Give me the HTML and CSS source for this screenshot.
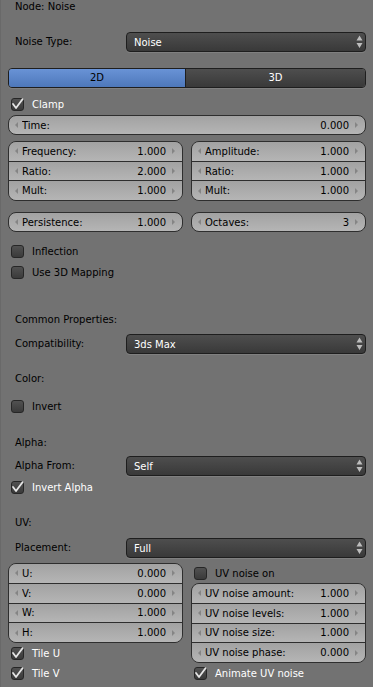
FILE: index.html
```html
<!DOCTYPE html>
<html>
<head>
<meta charset="utf-8">
<link rel="stylesheet" href="styles.css">
</head>
<body>
<div class="panel">
  <div class="title">Node: Noise</div>

  <div class="prop mt18">
    <div class="prop-label">Noise Type:</div>
    <div class="menu"><span>Noise</span><svg class="updown" width="7" height="14" viewBox="0 0 7 14"><path d="M0.5 5.5 L3.5 0.5 L6.5 5.5Z M0.5 8 L3.5 13 L6.5 8Z"/></svg></div>
  </div>

  <div class="toggle mt16">
    <div class="opt sel">2D</div>
    <div class="opt">3D</div>
  </div>

  <div class="check on mt6"><span class="cb"><svg width="13" height="13" viewBox="0 0 13 13"><path d="M2 6 L5 10 L11.5 1.2"/></svg></span><span class="cl">Clamp</span></div>

  <div class="num mt1"><span class="al"></span><span class="nl">Time:</span><span class="nv">0.000</span><span class="ar"></span></div>

  <div class="cols mt6">
    <div class="ngroup g3">
      <div class="nrow"><span class="al"></span><span class="nl">Frequency:</span><span class="nv">1.000</span><span class="ar"></span></div>
      <div class="nrow"><span class="al"></span><span class="nl">Ratio:</span><span class="nv">2.000</span><span class="ar"></span></div>
      <div class="nrow"><span class="al"></span><span class="nl">Mult:</span><span class="nv">1.000</span><span class="ar"></span></div>
    </div>
    <div class="ngroup g3">
      <div class="nrow"><span class="al"></span><span class="nl">Amplitude:</span><span class="nv">1.000</span><span class="ar"></span></div>
      <div class="nrow"><span class="al"></span><span class="nl">Ratio:</span><span class="nv">1.000</span><span class="ar"></span></div>
      <div class="nrow"><span class="al"></span><span class="nl">Mult:</span><span class="nv">1.000</span><span class="ar"></span></div>
    </div>
  </div>

  <div class="cols mt11">
    <div class="num half"><span class="al"></span><span class="nl">Persistence:</span><span class="nv">1.000</span><span class="ar"></span></div>
    <div class="num half"><span class="al"></span><span class="nl">Octaves:</span><span class="nv">3</span><span class="ar"></span></div>
  </div>

  <div class="check mt9"><span class="cb"></span><span class="cl">Inflection</span></div>
  <div class="check mt1"><span class="cb"></span><span class="cl">Use 3D Mapping</span></div>

  <div class="label mt28">Common Properties:</div>
  <div class="prop mt4">
    <div class="prop-label">Compatibility:</div>
    <div class="menu"><span>3ds Max</span><svg class="updown" width="7" height="14" viewBox="0 0 7 14"><path d="M0.5 5.5 L3.5 0.5 L6.5 5.5Z M0.5 8 L3.5 13 L6.5 8Z"/></svg></div>
  </div>

  <div class="label mt15">Color:</div>
  <div class="check mt7"><span class="cb"></span><span class="cl">Invert</span></div>

  <div class="label mt17">Alpha:</div>
  <div class="prop mt3">
    <div class="prop-label">Alpha From:</div>
    <div class="menu"><span>Self</span><svg class="updown" width="7" height="14" viewBox="0 0 7 14"><path d="M0.5 5.5 L3.5 0.5 L6.5 5.5Z M0.5 8 L3.5 13 L6.5 8Z"/></svg></div>
  </div>
  <div class="check on mt1"><span class="cb"><svg width="13" height="13" viewBox="0 0 13 13"><path d="M2 6 L5 10 L11.5 1.2"/></svg></span><span class="cl">Invert Alpha</span></div>

  <div class="label mt16">UV:</div>
  <div class="prop mt5">
    <div class="prop-label">Placement:</div>
    <div class="menu"><span>Full</span><svg class="updown" width="7" height="14" viewBox="0 0 7 14"><path d="M0.5 5.5 L3.5 0.5 L6.5 5.5Z M0.5 8 L3.5 13 L6.5 8Z"/></svg></div>
  </div>

  <div class="cols mt5">
    <div class="col">
      <div class="ngroup g4">
        <div class="nrow"><span class="al"></span><span class="nl">U:</span><span class="nv">0.000</span><span class="ar"></span></div>
        <div class="nrow"><span class="al"></span><span class="nl">V:</span><span class="nv">0.000</span><span class="ar"></span></div>
        <div class="nrow"><span class="al"></span><span class="nl">W:</span><span class="nv">1.000</span><span class="ar"></span></div>
        <div class="nrow"><span class="al"></span><span class="nl">H:</span><span class="nv">1.000</span><span class="ar"></span></div>
      </div>
      <div class="check on"><span class="cb"><svg width="13" height="13" viewBox="0 0 13 13"><path d="M2 6 L5 10 L11.5 1.2"/></svg></span><span class="cl">Tile U</span></div>
      <div class="check on"><span class="cb"><svg width="13" height="13" viewBox="0 0 13 13"><path d="M2 6 L5 10 L11.5 1.2"/></svg></span><span class="cl">Tile V</span></div>
    </div>
    <div class="col">
      <div class="check"><span class="cb"></span><span class="cl">UV noise on</span></div>
      <div class="ngroup g4">
        <div class="nrow"><span class="al"></span><span class="nl">UV noise amount:</span><span class="nv">1.000</span><span class="ar"></span></div>
        <div class="nrow"><span class="al"></span><span class="nl">UV noise levels:</span><span class="nv">1.000</span><span class="ar"></span></div>
        <div class="nrow"><span class="al"></span><span class="nl">UV noise size:</span><span class="nv">1.000</span><span class="ar"></span></div>
        <div class="nrow"><span class="al"></span><span class="nl">UV noise phase:</span><span class="nv">0.000</span><span class="ar"></span></div>
      </div>
      <div class="check on"><span class="cb"><svg width="13" height="13" viewBox="0 0 13 13"><path d="M2 6 L5 10 L11.5 1.2"/></svg></span><span class="cl">Animate UV noise</span></div>
    </div>
  </div>
</div>
</body>
</html>
```

FILE: styles.css
```css
* { box-sizing: border-box; margin: 0; padding: 0; }
html, body { width: 373px; height: 687px; overflow: hidden; }
body {
  background: #727272;
  font-family: "DejaVu Sans", "Liberation Sans", sans-serif;
  font-size: 10px;
  color: #000;
  box-shadow: inset 1px 0 0 #696969;
}
.panel { padding: 0 7px 0 8px; }

.mt1 { margin-top: 1px; }
.mt3 { margin-top: 3px; }
.mt4 { margin-top: 4px; }
.mt5 { margin-top: 5px; }
.mt6 { margin-top: 6px; }
.mt7 { margin-top: 7px; }
.mt9 { margin-top: 9px; }
.mt11 { margin-top: 11px; }
.mt15 { margin-top: 15px; }
.mt16 { margin-top: 16px; }
.mt17 { margin-top: 17px; }
.mt18 { margin-top: 18px; }
.mt28 { margin-top: 28px; }

.title { height: 14px; line-height: 14px; padding-left: 7px; }
.label { height: 20px; line-height: 20px; padding-left: 7px; }

.prop { display: flex; height: 20px; }
.prop-label { width: 118px; padding-left: 7px; line-height: 20px; white-space: nowrap; }
.menu {
  flex: 1;
  display: flex;
  align-items: center;
  justify-content: space-between;
  border: 1px solid #1e1e1e;
  border-radius: 4px;
  background: linear-gradient(#4e4e4e, #393939);
  color: #fff;
  padding: 0 2px 0 7px;
  box-shadow: 0 1px 0 rgba(255, 255, 255, 0.1);
}
.updown { display: block; fill: #bdbdbd; }

.toggle {
  display: flex;
  height: 20px;
  border: 1px solid #1e1e1e;
  border-radius: 4px;
  overflow: hidden;
  box-shadow: 0 1px 0 rgba(255, 255, 255, 0.1);
}
.opt {
  flex: 1;
  text-align: center;
  line-height: 18px;
  color: #fff;
  background: linear-gradient(#4e4e4e, #393939);
}
.opt.sel {
  flex: 0 0 177px;
  color: #000;
  background: linear-gradient(#6993d6, #4e78ba);
  border-right: 1px solid #1e1e1e;
}

.check { display: flex; align-items: center; height: 20px; padding-left: 3px; }
.cb {
  width: 13px;
  height: 13px;
  flex: none;
  border: 1px solid #262626;
  border-radius: 3px;
  background: linear-gradient(#515151, #3a3a3a);
  position: relative;
}
.cb svg {
  position: absolute;
  left: -1px;
  top: -1px;
  overflow: visible;
}
.cb svg path { fill: none; stroke: #e6e6e6; stroke-width: 1.8; stroke-linecap: round; stroke-linejoin: round; }
.cl { margin-left: 8px; white-space: nowrap; }
.check.on .cl { color: #fff; }

.cols { display: flex; gap: 8px; }
.col { width: 175px; flex: none; display: flex; flex-direction: column; }

.num, .nrow {
  display: flex;
  align-items: center;
  padding: 0 7px 0 6px;
  background: linear-gradient(#a2a2a2, #b5b5b5);
  white-space: nowrap;
}
.num {
  height: 20px;
  border: 1px solid #2e2e2e;
  border-radius: 8px;
}
.num.half { width: 175px; flex: none; }
.ngroup {
  width: 175px;
  flex: none;
  display: flex;
  flex-direction: column;
  border: 1px solid #2e2e2e;
  border-radius: 8px;
  overflow: hidden;
}
.ngroup.g3 { height: 60px; }
.ngroup.g4 { height: 80px; }
.nrow { flex: 1; }
.nrow + .nrow { border-top: 1px solid #2e2e2e; }

.al {
  width: 0;
  height: 0;
  border-right: 3px solid #858585;
  border-top: 3px solid transparent;
  border-bottom: 3px solid transparent;
}
.ar {
  width: 0;
  height: 0;
  border-left: 3px solid #858585;
  border-top: 3px solid transparent;
  border-bottom: 3px solid transparent;
}
.nl { flex: 1; margin-left: 4px; overflow: hidden; }
.nv { margin-right: 6px; }
```
